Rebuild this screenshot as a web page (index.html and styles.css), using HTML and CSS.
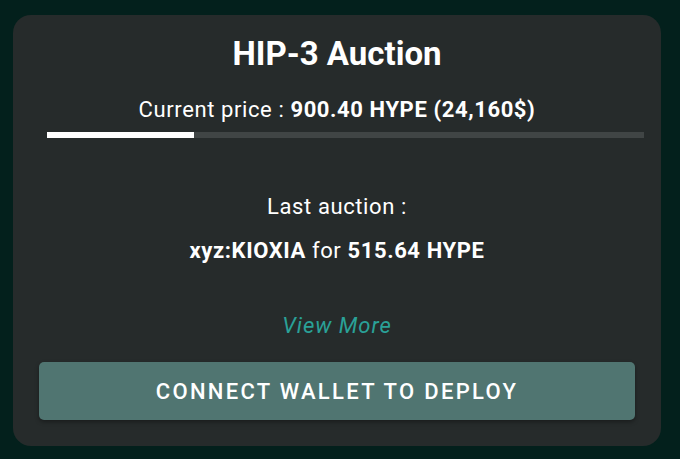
FILE: index.html
```html
<!DOCTYPE html>
<html lang="en">
<head>
    <meta charset="UTF-8">
    <meta name="viewport" content="width=device-width, initial-scale=1.0">
    <title>HIP-3 Auction</title>
    <link rel="stylesheet" href="styles.css">
</head>
<body>
    <div class="auction-card">
        <h2 class="title">HIP-3 Auction</h2>
        <div class="price">Current price : <b>900.40 HYPE (24,160$)</b></div>
        <div class="progress">
            <div class="progress-fill" style="width: 24.7%"></div>
        </div>

        <div class="last-label">Last auction :</div>
        <div class="last-value"><b>xyz:KIOXIA</b> for <b>515.64 HYPE</b></div>

        <a class="view-more" href="#">View More</a>

        <button class="deploy-btn">CONNECT WALLET TO DEPLOY</button>
    </div>
</body>
</html>
```

FILE: styles.css
```css
body {
    margin: 0;
    height: 459px;
    background-color: #03201c;
    font-family: Roboto, "Liberation Sans", sans-serif;
    color: #ffffff;
    padding: 15px 19px 13px 13px;
    box-sizing: border-box;
}
.auction-card {
    height: 431px;
    box-sizing: border-box;
    background: #262b2b;
    border-radius: 18px;
    padding: 19px 26px 0 26px;
    display: flex;
    flex-direction: column;
    align-items: center;
}
.title {
    margin: 0;
    font-size: 33px;
    font-weight: 700;
    line-height: 40px;
}
.price {
    margin-top: 23px;
    font-size: 22px;
    line-height: 26px;
    letter-spacing: 0.6px;
}
.price b, .last-value b {
    font-weight: 700;
}
.progress {
    align-self: stretch;
    margin: 9px -9px 0 8px;
    height: 6px;
    background: #404545;
}
.progress-fill {
    height: 100%;
    background: #ffffff;
}
.last-label {
    margin-top: 56px;
    font-size: 22px;
    line-height: 26px;
    letter-spacing: 0.6px;
}
.last-value {
    margin-top: 18px;
    font-size: 22px;
    line-height: 26px;
    letter-spacing: 0.6px;
}
.view-more {
    margin-top: 49px;
    font-size: 22px;
    line-height: 26px;
    font-style: italic;
    letter-spacing: 1px;
    color: #2aa198;
    text-decoration: none;
}
.deploy-btn {
    align-self: stretch;
    margin-top: 23px;
    height: 58px;
    border: none;
    border-radius: 5px;
    background: #507571;
    color: #ffffff;
    font-family: Roboto, "Liberation Sans", sans-serif;
    font-size: 22px;
    font-weight: 500;
    letter-spacing: 2.3px;
    box-shadow: 0 2px 4px rgba(0, 0, 0, 0.35);
    cursor: pointer;
}
```
